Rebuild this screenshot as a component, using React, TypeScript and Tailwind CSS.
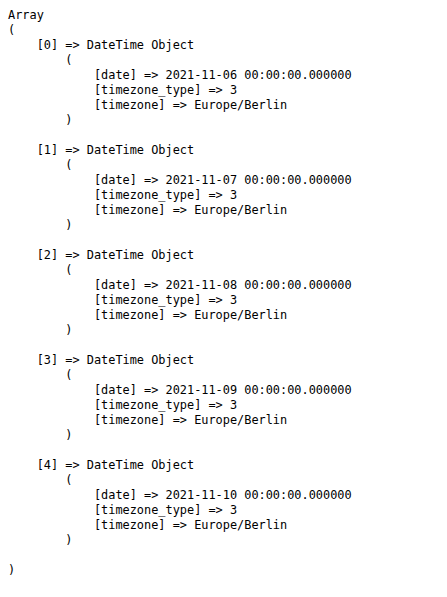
const dates = ['2021-11-06', '2021-11-07', '2021-11-08', '2021-11-09', '2021-11-10'];

function buildDump() {
  let out = 'Array\n(\n';
  dates.forEach((d, i) => {
    out += `    [${i}] => DateTime Object\n`;
    out += '        (\n';
    out += `            [date] => ${d} 00:00:00.000000\n`;
    out += '            [timezone_type] => 3\n';
    out += '            [timezone] => Europe/Berlin\n';
    out += '        )\n\n';
  });
  out += ')\n';
  return out;
}

export default function App() {
  return (
    <div className="min-h-screen bg-white">
      <pre className="m-0 px-2 pt-2 font-['DejaVu_Sans_Mono',monospace] text-[11.9px] leading-[15px] text-black">
        {buildDump()}
      </pre>
    </div>
  );
}
